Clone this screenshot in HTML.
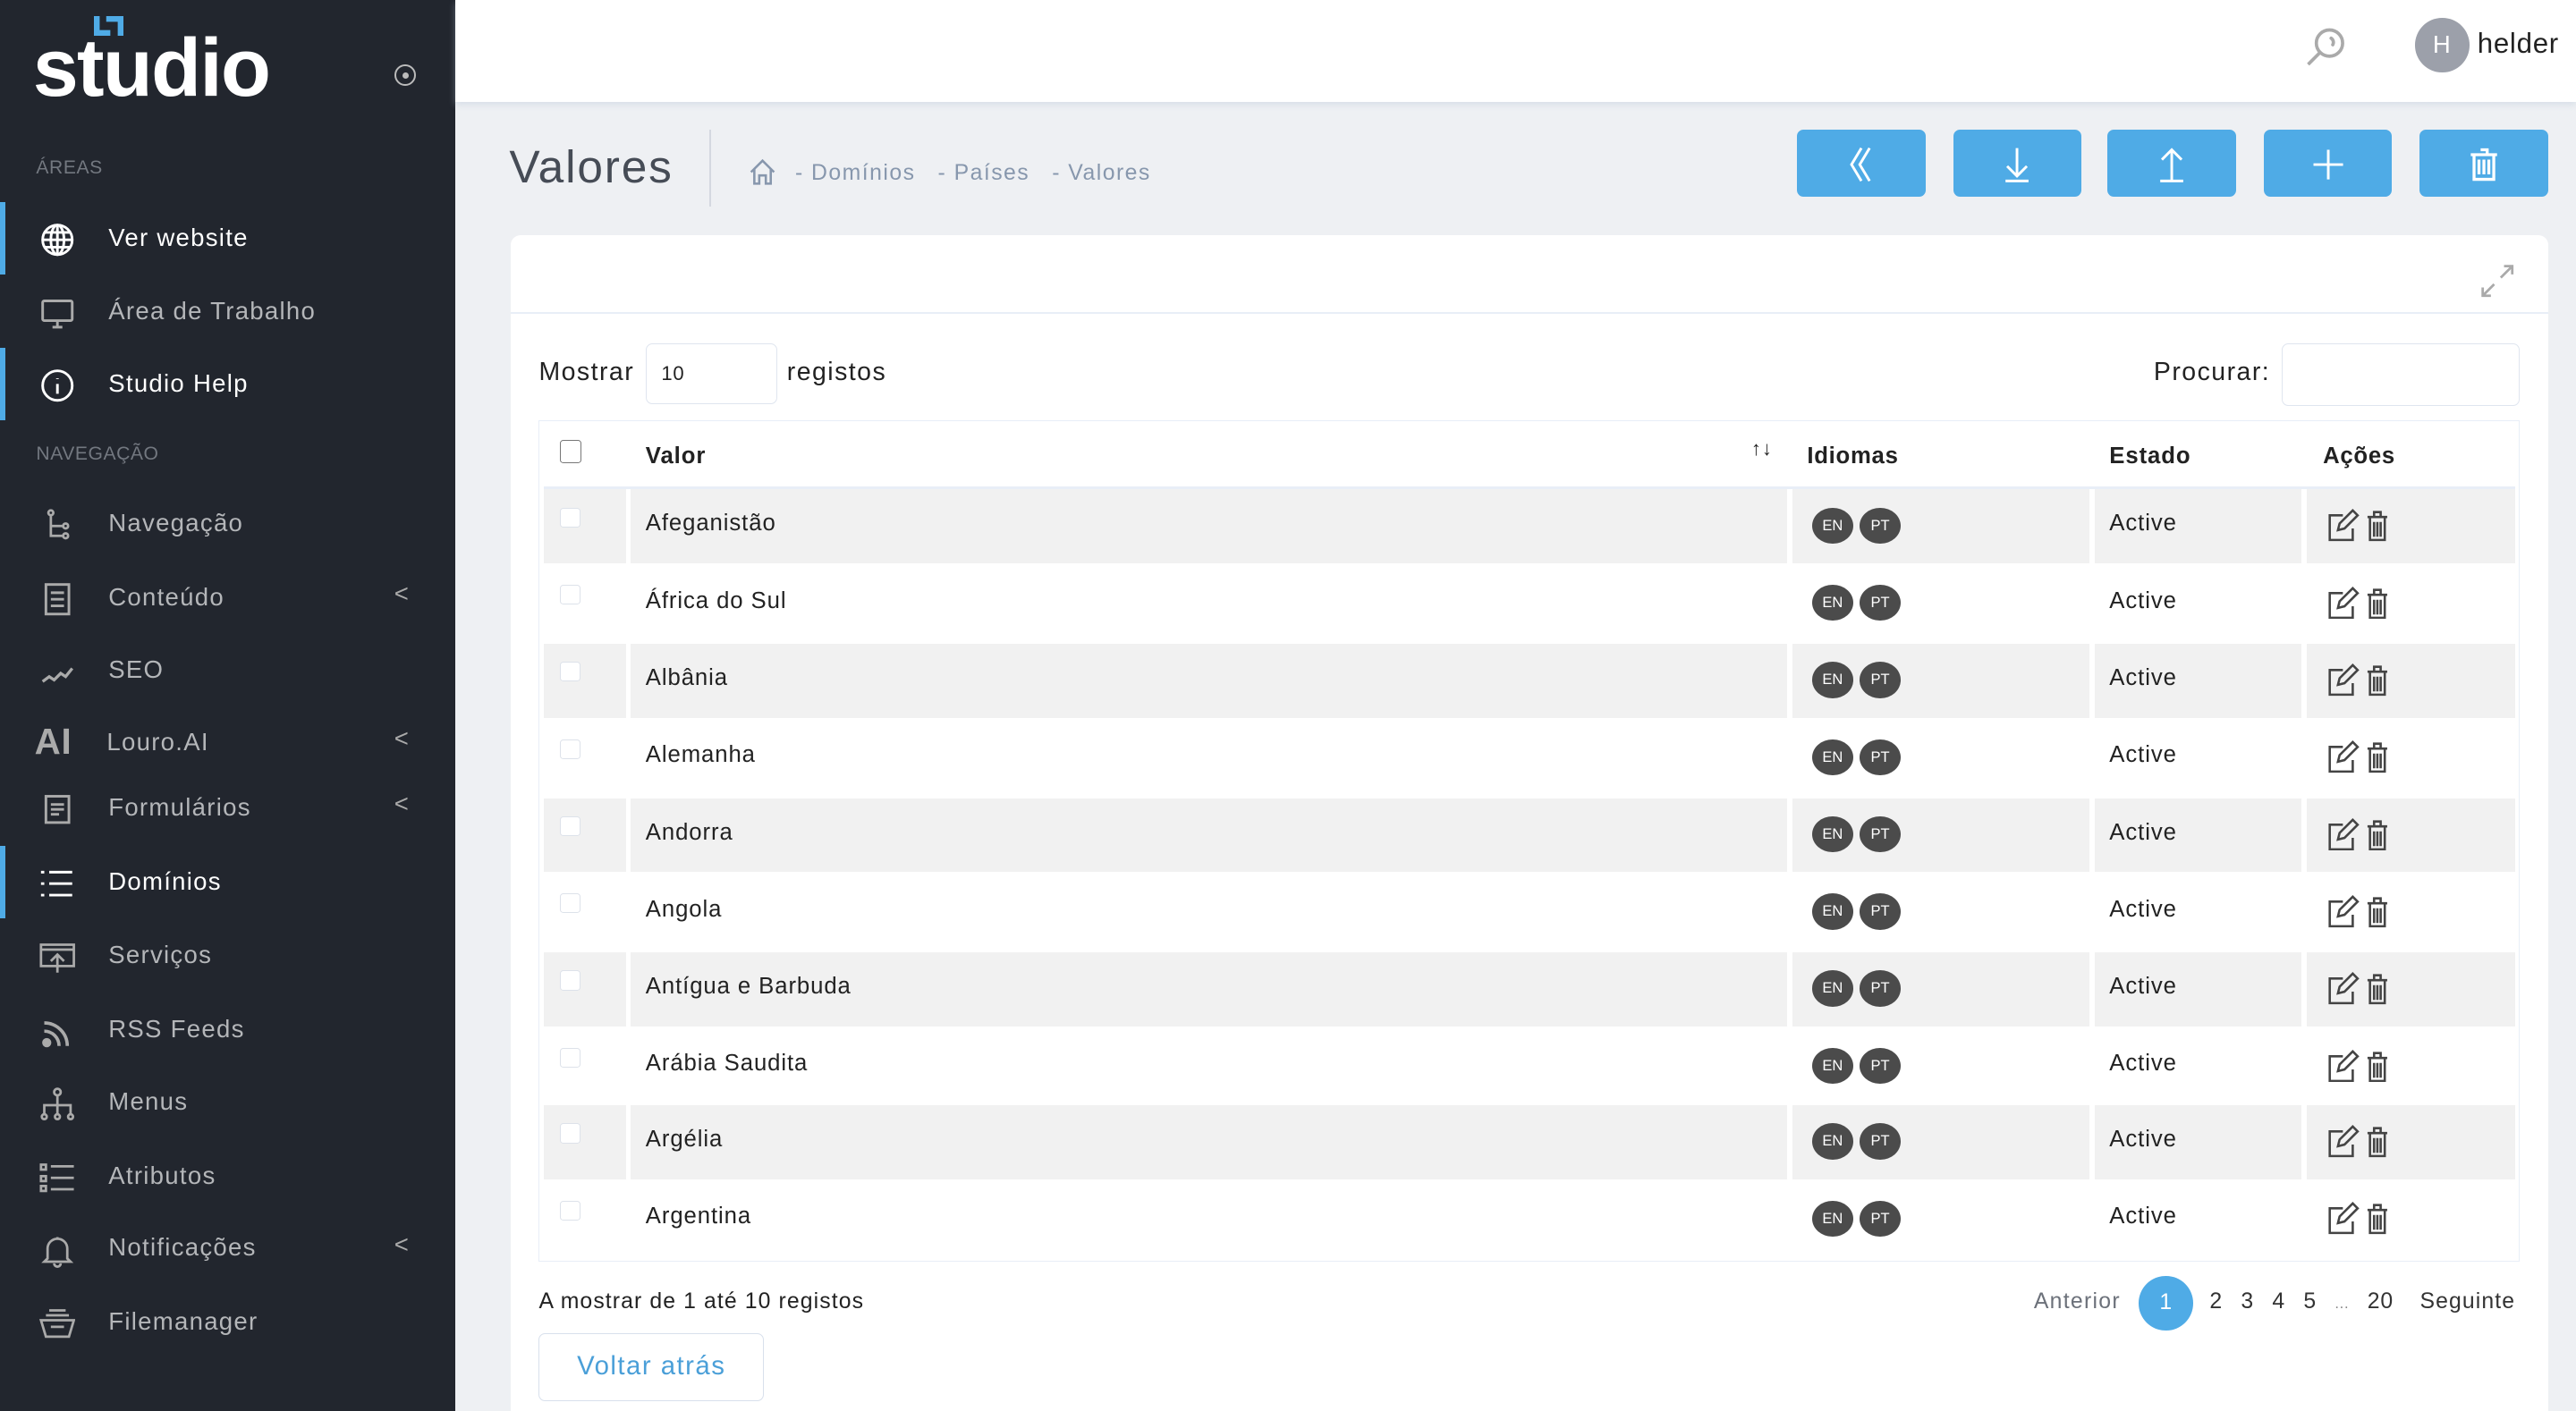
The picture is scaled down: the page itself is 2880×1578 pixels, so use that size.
<!DOCTYPE html>
<html><head><meta charset="utf-8">
<style>
html,body{margin:0;padding:0;width:2880px;height:1578px;overflow:hidden;background:#eef0f3}
#z{zoom:1.8367;width:1568px;height:859px;position:relative;font-family:"Liberation Sans",sans-serif;color:#222;overflow:hidden;letter-spacing:.4px}
.a{position:absolute}
#sb{left:0;top:0;width:277px;height:859px;background:#22262e}
.sec{position:absolute;left:22px;font-size:11.5px;color:#737880;letter-spacing:.3px}
.it{position:absolute;left:0;width:277px;height:44px}
.it .t{position:absolute;left:66px;top:13px;font-size:15px;color:#b4b6b9;letter-spacing:.7px}
.it.w .t{color:#fff}
.it .bar{position:absolute;left:0;top:0;width:3px;height:44px;background:#4fabe6}
.it svg{position:absolute;left:24px;top:12px}
.it .ch{position:absolute;left:240px;top:11px;color:#aaa;font-size:15px}
#hd{left:277px;top:0;width:1291px;height:62px;background:#fff;box-shadow:0 2px 4px rgba(180,195,215,.4)}
.btn{position:absolute;top:79px;width:78px;height:41px;background:#4fabe6;border-radius:4px}
.btn svg{position:absolute;left:27px;top:9px}
#card{left:311px;top:143px;width:1240px;height:730px;background:#fff;border-radius:6px}
.row{position:absolute;left:331px;width:1200px;height:45px}
.c{position:absolute;top:0;height:45px}
.g .c{background:#f1f1f1}
.c0{left:0;width:50px}.c1{left:53px;width:704px}.c2{left:760px;width:181px}.c3{left:944px;width:126px}.c4{left:1073px;width:127px}
.c1 span,.c3 span{position:absolute;top:13px;left:9px;font-size:14px;color:#222;letter-spacing:.5px}
.cb{position:absolute;left:10px;top:11px;width:11px;height:11px;border:1px solid #dde2ea;border-radius:2px;background:#fff}
.lg{position:absolute;top:11px;width:25px;height:22px;border-radius:50%;background:#4b4b4b;color:#fff;font-size:9px;text-align:center;line-height:22px;letter-spacing:0}
.ac{position:absolute;left:12px;top:12px}
</style></head><body><div id="z">
<div class="a" style="left:0;top:0;width:1568px;height:1px;background:#e8dfcf"></div>
<div id="sb" class="a">
 <svg class="a" style="left:57px;top:10px" width="18" height="12" viewBox="0 0 18 12" fill="#4fabe6"><path d="M0 0h3.5v8.5H10V12H0zM7.5 0H18v12h-3.5V3.5h-7z"/></svg>
 <div class="a" style="left:20px;top:13px;font-size:50px;font-weight:bold;color:#fff;letter-spacing:-1px">studio</div>
 <div class="a" style="left:240px;top:39px;width:11px;height:11px;border:1.5px solid #bbb;border-radius:50%"></div>
 <div class="a" style="left:245px;top:44px;width:4px;height:4px;background:#bbb;border-radius:50%"></div>
 <div class="sec" style="top:96px">ÁREAS</div>
 <div class="it w" style="top:123px"><div class="bar"></div><svg width="22" height="22" viewBox="0 0 22 22" fill="none" stroke="#fff" stroke-width="1.6"><circle cx="11" cy="11" r="9"/><ellipse cx="11" cy="11" rx="4" ry="9"/><path d="M2 11h18M3.5 6.5h15M3.5 15.5h15M11 2v18"/></svg><span class="t">Ver website</span></div>
 <div class="it" style="top:168px"><svg width="22" height="22" viewBox="0 0 22 22" fill="none" stroke="#aaa" stroke-width="1.6"><rect x="2" y="3" width="18" height="12" rx="1"/><path d="M8 19h6M11 15v4"/></svg><span class="t">Área de Trabalho</span></div>
 <div class="it w" style="top:212px"><div class="bar"></div><svg width="22" height="22" viewBox="0 0 22 22" fill="none" stroke="#fff" stroke-width="1.6"><circle cx="11" cy="11" r="9"/><path d="M11 10v6M11 6.5v.5"/></svg><span class="t">Studio Help</span></div>
 <div class="sec" style="top:270px">NAVEGAÇÃO</div>
 <div class="it" style="top:297px"><svg width="22" height="22" viewBox="0 0 22 22" fill="none" stroke="#aaa" stroke-width="1.5"><circle cx="7" cy="3" r="1.5"/><path d="M7 5v12h7M7 11h7"/><circle cx="16" cy="11" r="1.5"/><circle cx="16" cy="17" r="1.5"/></svg><span class="t">Navegação</span></div>
 <div class="it" style="top:342px"><svg width="22" height="22" viewBox="0 0 22 22" fill="none" stroke="#aaa" stroke-width="1.6"><rect x="4" y="2" width="14" height="18"/><path d="M7 7h8M7 11h8M7 15h8"/></svg><span class="t">Conteúdo</span><span class="ch">&lt;</span></div>
 <div class="it" style="top:386px"><svg width="22" height="22" viewBox="0 0 22 22" fill="none" stroke="#aaa" stroke-width="1.8"><path d="M2 17l4-3 3 2 4-4 3 2 4-5"/></svg><span class="t">SEO</span></div>
 <div class="it" style="top:430px"><span class="a" style="left:21px;top:9px;font-size:22px;font-weight:bold;color:#aaa">AI</span><span class="t" style="left:65px">Louro.AI</span><span class="ch">&lt;</span></div>
 <div class="it" style="top:470px"><svg width="22" height="22" viewBox="0 0 22 22" fill="none" stroke="#aaa" stroke-width="1.6"><rect x="4" y="3" width="14" height="16"/><path d="M7 8h8M7 11h8M7 14h5"/></svg><span class="t">Formulários</span><span class="ch">&lt;</span></div>
 <div class="it w" style="top:515px"><div class="bar"></div><svg width="22" height="22" viewBox="0 0 22 22" fill="none" stroke="#fff" stroke-width="1.6"><path d="M6 4h14M6 11h14M6 18h14M1 4h2M1 11h2M1 18h2"/></svg><span class="t">Domínios</span></div>
 <div class="it" style="top:560px"><svg width="22" height="22" viewBox="0 0 22 22" fill="none" stroke="#aaa" stroke-width="1.5"><rect x="1" y="3" width="20" height="13"/><path d="M11 20v-11M7 13l4-4 4 4M1 6h20"/></svg><span class="t">Serviços</span></div>
 <div class="it" style="top:605px"><svg width="22" height="22" viewBox="0 0 22 22" fill="none" stroke="#aaa" stroke-width="2"><path d="M3 6a14 14 0 0 1 14 14M3 11a9 9 0 0 1 9 9"/><circle cx="4.5" cy="18" r="1.8" fill="#aaa"/></svg><span class="t">RSS Feeds</span></div>
 <div class="it" style="top:649px"><svg width="22" height="22" viewBox="0 0 22 22" fill="none" stroke="#aaa" stroke-width="1.5"><circle cx="11" cy="4" r="2"/><path d="M11 6v12M3 18v-6h16v6"/><circle cx="3" cy="19" r="1.5"/><circle cx="11" cy="19" r="1.5"/><circle cx="19" cy="19" r="1.5"/></svg><span class="t">Menus</span></div>
 <div class="it" style="top:694px"><svg width="22" height="22" viewBox="0 0 22 22" fill="none" stroke="#aaa" stroke-width="1.5"><rect x="1" y="3" width="3" height="3"/><rect x="1" y="10" width="3" height="3"/><rect x="1" y="16" width="3" height="3"/><path d="M7 4h14M7 11h14M7 18h14"/></svg><span class="t">Atributos</span></div>
 <div class="it" style="top:738px"><svg width="22" height="22" viewBox="0 0 22 22" fill="none" stroke="#aaa" stroke-width="1.5"><path d="M5 16v-6a6 6 0 0 1 12 0v6l2 2H3zM9 19a2 2 0 0 0 4 0M11 3v1"/></svg><span class="t">Notificações</span><span class="ch">&lt;</span></div>
 <div class="it" style="top:783px"><svg width="22" height="22" viewBox="0 0 22 22" fill="none" stroke="#aaa" stroke-width="1.5"><path d="M1 9h20l-3 10H4zM4 6h14M6 3h10M7 13h8"/></svg><span class="t">Filemanager</span></div>
</div>
<div id="hd" class="a"></div>
<svg class="a" style="left:1402px;top:15px" width="28" height="28" viewBox="0 0 28 28" fill="none" stroke="#aaa" stroke-width="2"><circle cx="16" cy="11" r="8"/><path d="M10 17l-7 7"/><path d="M17 8a3 3 0 0 1 1 4" stroke-linecap="round"/></svg>
<div class="a" style="left:1470px;top:11px;width:33px;height:33px;border-radius:50%;background:#9ca0aa;color:#fff;font-size:15px;text-align:center;line-height:33px">H</div>
<div class="a" style="left:1508px;top:17px;font-size:17px;color:#222">helder</div>
<div class="a" style="left:310px;top:85px;font-size:28px;color:#464c56;letter-spacing:1px">Valores</div>
<div class="a" style="left:432px;top:79px;width:1px;height:47px;background:#d4d8e0"></div>
<svg class="a" style="left:455px;top:96px" width="18" height="18" viewBox="0 0 18 18" fill="none" stroke="#8797ad" stroke-width="1.4"><path d="M2 9l7-7 7 7M4 7v9h3v-5h4v5h3V7"/></svg>
<div class="a" style="left:484px;top:98px;font-size:13.5px;color:#8797ad;letter-spacing:.8px">- Domínios &nbsp;&nbsp;- Países &nbsp;&nbsp;- Valores</div>
<div class="btn" style="left:1094px"><svg width="24" height="24" viewBox="0 0 24 24" fill="none" stroke="#fff" stroke-width="1.6"><path d="M12 2L6 12l6 10M17 2l-6 10 6 10"/></svg></div>
<div class="btn" style="left:1189px"><svg width="24" height="24" viewBox="0 0 24 24" fill="none" stroke="#fff" stroke-width="1.6"><path d="M12 2v17M6 13l6 6 6-6M5 22h14"/></svg></div>
<div class="btn" style="left:1283px"><svg width="24" height="24" viewBox="0 0 24 24" fill="none" stroke="#fff" stroke-width="1.6"><path d="M12 22V4M6 9l6-6 6 6M5 22h14"/></svg></div>
<div class="btn" style="left:1378px"><svg width="24" height="24" viewBox="0 0 24 24" fill="none" stroke="#fff" stroke-width="1.6"><path d="M12 3v18M3 12h18"/></svg></div>
<div class="btn" style="left:1473px"><svg width="24" height="24" viewBox="0 0 24 24" fill="none" stroke="#fff" stroke-width="1.8"><path d="M6 6h12v15H6zM4 6h16M10 3h4v3M9 9v9M12 9v9M15 9v9"/></svg></div>
<div id="card" class="a"></div>
<div class="a" style="left:311px;top:190px;width:1240px;height:1px;background:#e8eef7"></div>
<svg class="a" style="left:1509px;top:160px" width="22" height="22" viewBox="0 0 22 22" fill="none" stroke="#aaa" stroke-width="1.5"><path d="M13 9l7-7M15 2h5v5M9 13l-7 7M2 15v5h5"/></svg>
<div class="a" style="left:328px;top:218px;font-size:15.5px;letter-spacing:.8px">Mostrar</div>
<div class="a" style="left:393px;top:209px;width:80px;height:37px;border:1px solid #dfe5ef;border-radius:4px;box-sizing:border-box"><span style="position:absolute;left:9px;top:11px;font-size:12px">10</span></div>
<div class="a" style="left:479px;top:218px;font-size:15.5px;letter-spacing:.8px">registos</div>
<div class="a" style="left:1311px;top:218px;font-size:15.5px;letter-spacing:.8px">Procurar:</div>
<div class="a" style="left:1389px;top:209px;width:145px;height:38px;border:1px solid #dfe5ef;border-radius:4px;box-sizing:border-box"></div>
<div class="a" style="left:328px;top:256px;width:1206px;height:512px;border:1px solid #e8eef7;box-sizing:border-box"></div>
<div class="row" style="top:258px;height:38px">
 <div class="c c0" style="height:38px"><div class="cb" style="top:10px;border-color:#777;width:12px;height:13px"></div></div>
 <div class="c c1" style="height:38px"><span style="font-weight:bold;top:12px">Valor</span><span style="left:682px;top:8px;font-size:12px">↑↓</span></div>
 <div class="c c2" style="height:38px"><span style="position:absolute;left:9px;top:12px;font-size:14px;font-weight:bold">Idiomas</span></div>
 <div class="c c3" style="height:38px"><span style="font-weight:bold;top:12px">Estado</span></div>
 <div class="c c4" style="height:38px"><span style="position:absolute;left:10px;top:12px;font-size:14px;font-weight:bold">Ações</span></div>
</div>
<div class="a" style="left:331px;top:296px;width:1200px;height:2px;background:#e8eef7"></div>

<div class="row g" style="top:298px"><div class="c c0"><div class="cb"></div></div><div class="c c1"><span>Afeganistão</span></div><div class="c c2"><div class="lg" style="left:12px">EN</div><div class="lg" style="left:41px">PT</div></div><div class="c c3"><span>Active</span></div><div class="c c4"><svg class="ac" width="38" height="20" viewBox="0 0 38 20" fill="none" stroke="#444" stroke-width="1.4"><path d="M10 4H2v15h14v-7M7 13l1-4 8-8 3 3-8 8z"/><path d="M25 5h12M29 5V2h4v3M26.5 5h9v14h-9zM29 8v9M31 8v9M33 8v9"/></svg></div></div>
<div class="row" style="top:345px"><div class="c c0"><div class="cb"></div></div><div class="c c1"><span>África do Sul</span></div><div class="c c2"><div class="lg" style="left:12px">EN</div><div class="lg" style="left:41px">PT</div></div><div class="c c3"><span>Active</span></div><div class="c c4"><svg class="ac" width="38" height="20" viewBox="0 0 38 20" fill="none" stroke="#444" stroke-width="1.4"><path d="M10 4H2v15h14v-7M7 13l1-4 8-8 3 3-8 8z"/><path d="M25 5h12M29 5V2h4v3M26.5 5h9v14h-9zM29 8v9M31 8v9M33 8v9"/></svg></div></div>
<div class="row g" style="top:392px"><div class="c c0"><div class="cb"></div></div><div class="c c1"><span>Albânia</span></div><div class="c c2"><div class="lg" style="left:12px">EN</div><div class="lg" style="left:41px">PT</div></div><div class="c c3"><span>Active</span></div><div class="c c4"><svg class="ac" width="38" height="20" viewBox="0 0 38 20" fill="none" stroke="#444" stroke-width="1.4"><path d="M10 4H2v15h14v-7M7 13l1-4 8-8 3 3-8 8z"/><path d="M25 5h12M29 5V2h4v3M26.5 5h9v14h-9zM29 8v9M31 8v9M33 8v9"/></svg></div></div>
<div class="row" style="top:439px"><div class="c c0"><div class="cb"></div></div><div class="c c1"><span>Alemanha</span></div><div class="c c2"><div class="lg" style="left:12px">EN</div><div class="lg" style="left:41px">PT</div></div><div class="c c3"><span>Active</span></div><div class="c c4"><svg class="ac" width="38" height="20" viewBox="0 0 38 20" fill="none" stroke="#444" stroke-width="1.4"><path d="M10 4H2v15h14v-7M7 13l1-4 8-8 3 3-8 8z"/><path d="M25 5h12M29 5V2h4v3M26.5 5h9v14h-9zM29 8v9M31 8v9M33 8v9"/></svg></div></div>
<div class="row g" style="top:486px"><div class="c c0"><div class="cb"></div></div><div class="c c1"><span>Andorra</span></div><div class="c c2"><div class="lg" style="left:12px">EN</div><div class="lg" style="left:41px">PT</div></div><div class="c c3"><span>Active</span></div><div class="c c4"><svg class="ac" width="38" height="20" viewBox="0 0 38 20" fill="none" stroke="#444" stroke-width="1.4"><path d="M10 4H2v15h14v-7M7 13l1-4 8-8 3 3-8 8z"/><path d="M25 5h12M29 5V2h4v3M26.5 5h9v14h-9zM29 8v9M31 8v9M33 8v9"/></svg></div></div>
<div class="row" style="top:533px"><div class="c c0"><div class="cb"></div></div><div class="c c1"><span>Angola</span></div><div class="c c2"><div class="lg" style="left:12px">EN</div><div class="lg" style="left:41px">PT</div></div><div class="c c3"><span>Active</span></div><div class="c c4"><svg class="ac" width="38" height="20" viewBox="0 0 38 20" fill="none" stroke="#444" stroke-width="1.4"><path d="M10 4H2v15h14v-7M7 13l1-4 8-8 3 3-8 8z"/><path d="M25 5h12M29 5V2h4v3M26.5 5h9v14h-9zM29 8v9M31 8v9M33 8v9"/></svg></div></div>
<div class="row g" style="top:580px"><div class="c c0"><div class="cb"></div></div><div class="c c1"><span>Antígua e Barbuda</span></div><div class="c c2"><div class="lg" style="left:12px">EN</div><div class="lg" style="left:41px">PT</div></div><div class="c c3"><span>Active</span></div><div class="c c4"><svg class="ac" width="38" height="20" viewBox="0 0 38 20" fill="none" stroke="#444" stroke-width="1.4"><path d="M10 4H2v15h14v-7M7 13l1-4 8-8 3 3-8 8z"/><path d="M25 5h12M29 5V2h4v3M26.5 5h9v14h-9zM29 8v9M31 8v9M33 8v9"/></svg></div></div>
<div class="row" style="top:627px"><div class="c c0"><div class="cb"></div></div><div class="c c1"><span>Arábia Saudita</span></div><div class="c c2"><div class="lg" style="left:12px">EN</div><div class="lg" style="left:41px">PT</div></div><div class="c c3"><span>Active</span></div><div class="c c4"><svg class="ac" width="38" height="20" viewBox="0 0 38 20" fill="none" stroke="#444" stroke-width="1.4"><path d="M10 4H2v15h14v-7M7 13l1-4 8-8 3 3-8 8z"/><path d="M25 5h12M29 5V2h4v3M26.5 5h9v14h-9zM29 8v9M31 8v9M33 8v9"/></svg></div></div>
<div class="row g" style="top:673px"><div class="c c0"><div class="cb"></div></div><div class="c c1"><span>Argélia</span></div><div class="c c2"><div class="lg" style="left:12px">EN</div><div class="lg" style="left:41px">PT</div></div><div class="c c3"><span>Active</span></div><div class="c c4"><svg class="ac" width="38" height="20" viewBox="0 0 38 20" fill="none" stroke="#444" stroke-width="1.4"><path d="M10 4H2v15h14v-7M7 13l1-4 8-8 3 3-8 8z"/><path d="M25 5h12M29 5V2h4v3M26.5 5h9v14h-9zM29 8v9M31 8v9M33 8v9"/></svg></div></div>
<div class="row" style="top:720px"><div class="c c0"><div class="cb"></div></div><div class="c c1"><span>Argentina</span></div><div class="c c2"><div class="lg" style="left:12px">EN</div><div class="lg" style="left:41px">PT</div></div><div class="c c3"><span>Active</span></div><div class="c c4"><svg class="ac" width="38" height="20" viewBox="0 0 38 20" fill="none" stroke="#444" stroke-width="1.4"><path d="M10 4H2v15h14v-7M7 13l1-4 8-8 3 3-8 8z"/><path d="M25 5h12M29 5V2h4v3M26.5 5h9v14h-9zM29 8v9M31 8v9M33 8v9"/></svg></div></div>

<div class="a" style="left:328px;top:785px;font-size:13.5px;letter-spacing:.6px">A mostrar de 1 até 10 registos</div>
<div class="a" style="left:1238px;top:785px;font-size:13.5px;color:#6c717a;letter-spacing:.7px">Anterior</div>
<div class="a" style="left:1302px;top:777px;width:33px;height:33px;border-radius:50%;background:#4fabe6;color:#fff;font-size:13.5px;text-align:center;line-height:33px">1</div>
<div class="a" style="left:1345px;top:785px;font-size:13.5px;color:#333;word-spacing:7px">2 3 4 5 <span style="font-size:9px;color:#888">...</span> 20</div>
<div class="a" style="left:1473px;top:785px;font-size:13.5px;color:#333;letter-spacing:.6px">Seguinte</div>
<div class="a" style="left:328px;top:812px;width:137px;height:41px;border:1px solid #d8e0ec;border-radius:4px;box-sizing:border-box;color:#4a9fd8;font-size:16px;text-align:center;line-height:39px;letter-spacing:.8px">Voltar atrás</div>
</div></body></html>
